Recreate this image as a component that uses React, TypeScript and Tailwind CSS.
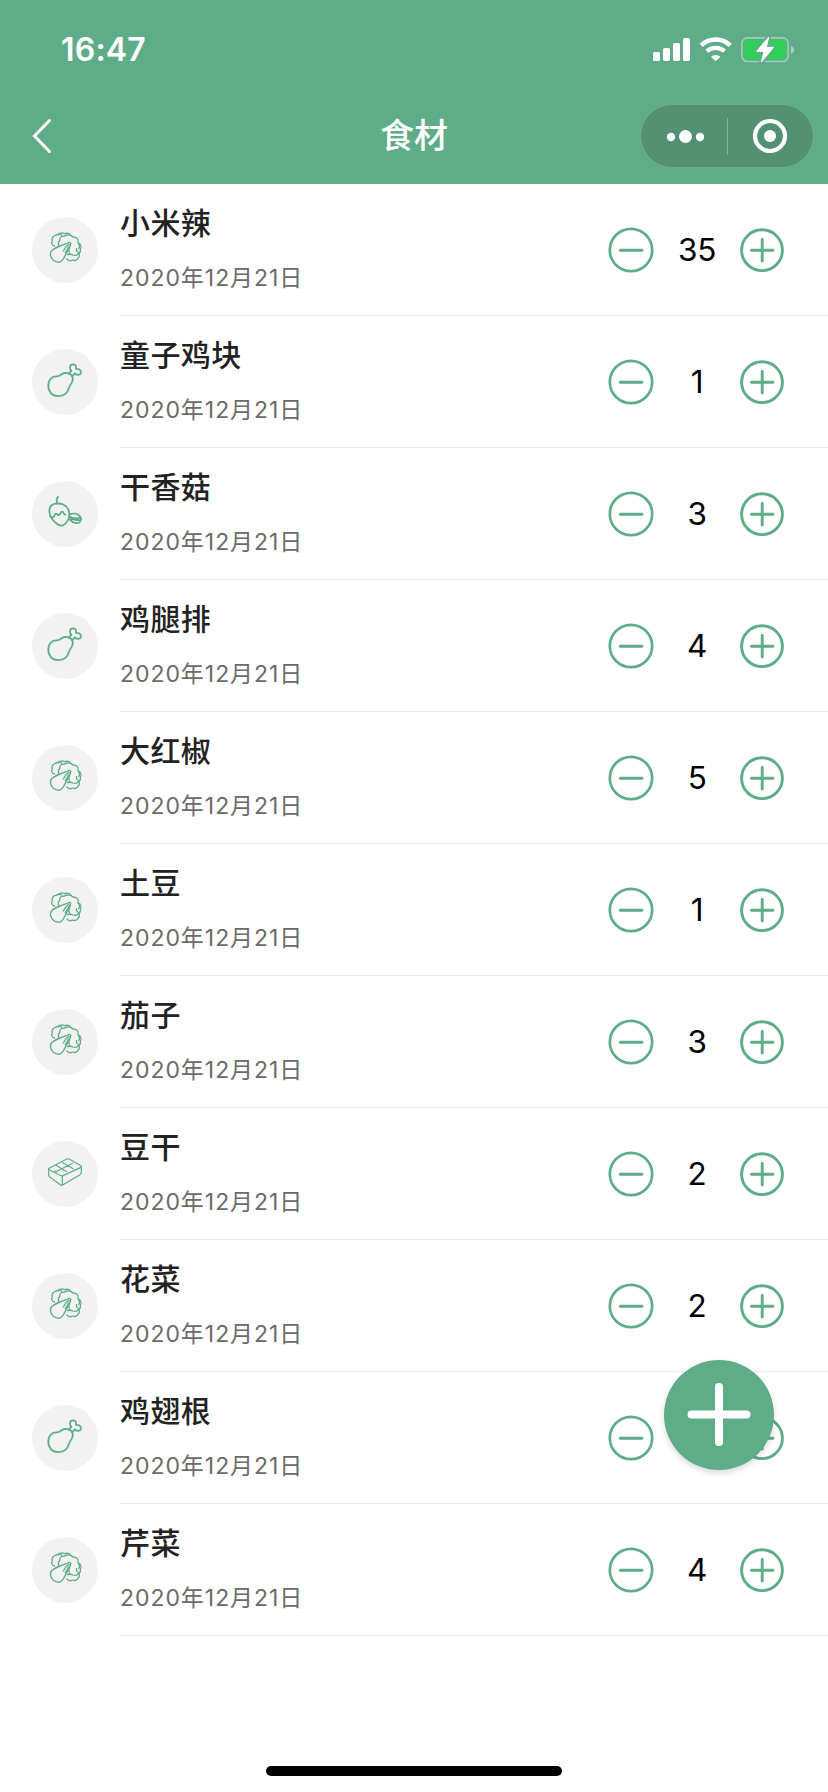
import { useState } from 'react';

type Kind = 'vegetable' | 'meat' | 'dried' | 'tofu';

interface Item {
  id: number;
  name: string;
  date: string;
  count: number;
  kind: Kind;
}

const INITIAL: Item[] = [
  { id: 1, name: '小米辣', date: '2020年12月21日', count: 35, kind: 'vegetable' },
  { id: 2, name: '童子鸡块', date: '2020年12月21日', count: 1, kind: 'meat' },
  { id: 3, name: '干香菇', date: '2020年12月21日', count: 3, kind: 'dried' },
  { id: 4, name: '鸡腿排', date: '2020年12月21日', count: 4, kind: 'meat' },
  { id: 5, name: '大红椒', date: '2020年12月21日', count: 5, kind: 'vegetable' },
  { id: 6, name: '土豆', date: '2020年12月21日', count: 1, kind: 'vegetable' },
  { id: 7, name: '茄子', date: '2020年12月21日', count: 3, kind: 'vegetable' },
  { id: 8, name: '豆干', date: '2020年12月21日', count: 2, kind: 'tofu' },
  { id: 9, name: '花菜', date: '2020年12月21日', count: 2, kind: 'vegetable' },
  { id: 10, name: '鸡翅根', date: '2020年12月21日', count: 3, kind: 'meat' },
  { id: 11, name: '芹菜', date: '2020年12月21日', count: 4, kind: 'vegetable' },
];

// Line drawings on a 198 unit square, offset by 6
function KindIcon({ kind }: { kind: Kind }) {
  return (
    <svg
      viewBox="6 6 198 198"
      className="size-full"
      fill="none"
      stroke="#5fad88"
      strokeLinecap="round"
      strokeLinejoin="round"
    >
      {kind === 'vegetable' && (
        <g strokeWidth="4">
          <path d="M74 93c-9-1-11-9-7-15-3-9 3-17 11-17 5-5 13-4 17-1" />
          <path d="M84 60c5-6 14-7 20-4 7-3 16-1 20 6" />
          <path d="M87 92c-4-5-3-12 2-15-1-9 5-15 13-13 8-6 22-5 27 2 11-1 18 8 15 17 5 5 5 13 2 18" />
          <path d="M148 85c5 5 6 13 3 17 1 7-1 12-6 13" />
          <path d="M147 114c2 6 1 12-3 16-4 7-12 8-17 5-5 4-12 2-16-3" />
          <path d="M119 82c-14 5-34 11-52 23-5 5-7 11-5 18 4 10 13 18 22 19 7 0 12-4 16-10 7-14 15-28 21-42" />
          <path d="M119 82c3 1 4 4 2 8M116 88c-6 5-13 14-16 20M121 90c-7 8-10 15-15 24" />
          <path d="M87 93c-6 3-11 6-16 10M119 96c-4 9-3 15 1 21M112 119c7-2 13-1 17 1M140 101c-2 4-1 8 4 10M133 121c5 1 8-1 11-4" />
        </g>
      )}
      {kind === 'meat' && (
        <g strokeWidth="5.4">
          <path d="M117 80c-7-4-19-3-27 5-5 5-13 1-22 6-15 9-17 31-7 45 11 14 34 15 46 4 8-7 9-17 13-25 8-8 12-24 4-31-2-2-4-3-7-4z" />
          <path d="M117 80l7-9c-7-6-5-18 4-19 8-1 12 6 10 14 8-1 16 3 15 11-2 8-12 9-18 2l-9 9" />
        </g>
      )}
      {kind === 'dried' && (
        <g strokeWidth="5.4">
          <path d="M82 73c-3-7-4-13 2-19" />
          <path d="M82 74c-13-2-24 8-24 21 0 10 3 17 8 24 7 10 19 21 32 21 14-8 21-24 20-38-2-17-18-31-36-28z" />
          <path d="M60 112c8 6 13 3 15-7 5-4 8 4 12 3 4-2 6-12 10-10 4 1 4 9 9 9" />
          <path d="M119 106c11-4 25-3 32 7 2 4-2 5-6 5-10 1-19-1-26-5" />
          <path d="M119 114c9 5 22 7 32 3 4 2 3 5-1 8 2 6-6 8-14 7-8-2-13-6-17-11M123 119c10 4 19 5 27 5" />
        </g>
      )}
      {kind === 'tofu' && (
        <g strokeWidth="3.6">
          <path d="M57 88l53-28c3-1 6-1 9 1l34 19c2 2 2 3 0 5l-54 25c-2 1-4 1-6 0L58 92c-2-1-3-3-1-4z" />
          <path d="M56 91v17c0 3 1 5 3 6l33 24c2 1 4 1 6 0l52-31c3-2 4-4 4-7V84M97 111v28" />
          <path d="M78 79l32 19M98 71l32 18M76 99l52-26M74 96l7 2" />
        </g>
      )}
    </svg>
  );
}

function StatusIcons() {
  return (
    <svg viewBox="153 105 435 90" className="h-[30px] w-[145px]" fill="#fff">
      <rect x="159" y="156" width="21" height="27" rx="5" />
      <rect x="189" y="144" width="21" height="39" rx="5" />
      <rect x="219" y="129" width="21" height="54" rx="5" />
      <rect x="249" y="114" width="21" height="69" rx="5" />
      {/* wifi */}
      <path d="M303.500 136a63 63 0 0 1 87 0" fill="none" stroke="#fff" strokeWidth="13.500" />
      <path d="M320.500 154a38.500 38.500 0 0 1 53 0" fill="none" stroke="#fff" strokeWidth="12.500" />
      <path d="M333 170a21 21 0 0 1 28 0l-14 14z" />
      {/* battery */}
      <rect x="425.500" y="113.500" width="139" height="71" rx="17" fill="none" stroke="#fff" strokeOpacity="0.4" strokeWidth="5" />
      <path d="M573 137c12 4 12 20 0 24z" fillOpacity="0.45" />
      <rect x="433" y="121" width="124" height="56" rx="10" fill="#30d158" />
      <path
        d="M506 111l-36 43h22l-8 32 37-44h-22z"
        stroke="#5fad88"
        strokeWidth="13"
        strokeLinejoin="round"
      />
      <path d="M506 111l-36 43h22l-8 32 37-44h-22z" stroke="#fff" strokeWidth="3" strokeLinejoin="round" />
    </svg>
  );
}

function Header() {
  return (
    <header className="h-[184px] bg-[#5fad88] text-white">
      <div className="flex h-[88px] items-center justify-between pt-3 pr-8 pl-[61px]">
        <span className="text-[32px] leading-none font-semibold tracking-[0.2px]">16:47</span>
        <StatusIcons />
      </div>
      <div className="grid h-24 grid-cols-[1fr_auto_1fr] items-center px-[14px]">
        <button className="ml-4 w-6" aria-label="返回">
          <svg viewBox="0 0 24 40" className="h-10 w-6" fill="none" stroke="#fff" strokeWidth="3" strokeLinecap="round">
            <path d="M19.500 4.500L4.500 20l15 15.500" />
          </svg>
        </button>
        <h1 className="text-[34px] leading-none font-medium">食材</h1>
        <div className="flex h-16 w-[174px] items-center justify-self-end rounded-full border border-white/20 bg-[#529273]">
          <svg viewBox="0 0 86 62" className="h-[62px] w-[86px]" fill="#fff">
            <circle cx="30" cy="32" r="4.200" />
            <circle cx="44.500" cy="31.500" r="6.500" />
            <circle cx="59" cy="32" r="4.200" />
          </svg>
          <div className="h-[37px] w-px bg-white/30" />
          <svg viewBox="0 0 85 62" className="h-[62px] w-[85px]" fill="none" stroke="#fff">
            <circle cx="42" cy="31" r="15" strokeWidth="4.200" />
            <circle cx="42" cy="31" r="6" fill="#fff" stroke="none" />
          </svg>
        </div>
      </div>
    </header>
  );
}

interface RowProps {
  item: Item;
  onChange: (id: number, delta: number) => void;
}

function Row({ item, onChange }: RowProps) {
  return (
    <li className="flex h-[132px] pl-8">
      <div className="mt-[33px] mr-[22px] size-[66px] shrink-0 rounded-full bg-[#f2f2f2]">
        <KindIcon kind={item.kind} />
      </div>
      <div className="flex flex-1 border-b border-[#ebebeb]">
        <div className="flex-1 pt-[21px]">
          <p className="text-[30px] leading-9 font-medium tracking-[0.4px] text-[#222]">{item.name}</p>
          <p className="mt-[21px] text-[23px] leading-8 tracking-[0.95px] text-[#6a6a6a]">{item.date}</p>
        </div>
        <div className="flex items-center pr-11">
          <button aria-label="减少" onClick={() => onChange(item.id, -1)}>
            <svg viewBox="0 0 46 46" className="size-[46px]" fill="none" stroke="#5fad88" strokeLinecap="round">
              <circle cx="23" cy="23" r="21.200" strokeWidth="2.700" />
              <path d="M12.300 23.300h21.600" strokeWidth="2.900" />
            </svg>
          </button>
          <span className="w-[86px] text-center text-[31.500px] leading-none tracking-[-0.4px] text-black">{item.count}</span>
          <button aria-label="增加" onClick={() => onChange(item.id, 1)}>
            <svg viewBox="0 0 44 44" className="size-[44px]" fill="none" stroke="#5fad88" strokeLinecap="round">
              <circle cx="22" cy="22.200" r="20.400" strokeWidth="2.900" />
              <path d="M11.400 22.300H33M22.200 11.500v21.600" strokeWidth="2.900" />
            </svg>
          </button>
        </div>
      </div>
    </li>
  );
}

export default function App() {
  const [items, setItems] = useState(INITIAL);

  const handleChange = (id: number, delta: number) => {
    setItems(prev => prev.map(i => (i.id === id ? { ...i, count: Math.max(0, i.count + delta) } : i)));
  };

  return (
    <div className="flex h-[1792px] w-[828px] flex-col overflow-hidden bg-white font-[Inter,'Noto_Sans_CJK_SC',sans-serif]">
      <Header />
      <ul className="flex-1">
        {items.map(item => (
          <Row key={item.id} item={item} onChange={handleChange} />
        ))}
      </ul>

      {/* Home indicator */}
      <div className="mb-4 h-[10px] w-[296px] self-center rounded-full bg-black" />

      <button
        aria-label="添加食材"
        className="fixed top-[1360px] left-[664px] flex size-[110px] items-center justify-center rounded-full bg-[#5fad88] shadow-[0_3px_6px_rgba(0,0,0,0.15)]"
      >
        <svg viewBox="0 0 64 64" className="size-16" stroke="#fff" strokeWidth="8" strokeLinecap="round">
          <path d="M4.500 31.500h55M32 4v55" />
        </svg>
      </button>
    </div>
  );
}
